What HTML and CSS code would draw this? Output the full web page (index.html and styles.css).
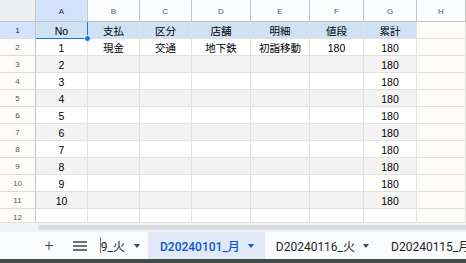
FILE: index.html
```html
<!DOCTYPE html>
<html lang="ja">
<head>
    <meta charset="UTF-8">
    <title>Sheet</title>
    <link rel="stylesheet" href="styles.css">
</head>
<body>
    <div class="sheet">
        <div class="grid">
            <div class="corner"></div>
            <div class="colhead sel">A</div>
            <div class="colhead">B</div>
            <div class="colhead">C</div>
            <div class="colhead">D</div>
            <div class="colhead">E</div>
            <div class="colhead">F</div>
            <div class="colhead">G</div>
            <div class="colhead">H</div>

            <div class="rowhead sel">1</div>
            <div class="cell head active">No<span class="handle"></span></div>
            <div class="cell head">支払</div>
            <div class="cell head">区分</div>
            <div class="cell head">店舗</div>
            <div class="cell head">明細</div>
            <div class="cell head">値段</div>
            <div class="cell head">累計</div>
            <div class="cell extra"></div>

            <div class="rowhead">2</div>
            <div class="cell">1</div>
            <div class="cell">現金</div>
            <div class="cell">交通</div>
            <div class="cell">地下鉄</div>
            <div class="cell">初詣移動</div>
            <div class="cell">180</div>
            <div class="cell">180</div>
            <div class="cell extra"></div>

            <div class="rowhead">3</div>
            <div class="cell band">2</div><div class="cell band"></div><div class="cell band"></div><div class="cell band"></div><div class="cell band"></div><div class="cell band"></div><div class="cell band">180</div><div class="cell extra"></div>
            <div class="rowhead">4</div>
            <div class="cell">3</div><div class="cell"></div><div class="cell"></div><div class="cell"></div><div class="cell"></div><div class="cell"></div><div class="cell">180</div><div class="cell extra"></div>
            <div class="rowhead">5</div>
            <div class="cell band">4</div><div class="cell band"></div><div class="cell band"></div><div class="cell band"></div><div class="cell band"></div><div class="cell band"></div><div class="cell band">180</div><div class="cell extra"></div>
            <div class="rowhead">6</div>
            <div class="cell">5</div><div class="cell"></div><div class="cell"></div><div class="cell"></div><div class="cell"></div><div class="cell"></div><div class="cell">180</div><div class="cell extra"></div>
            <div class="rowhead">7</div>
            <div class="cell band">6</div><div class="cell band"></div><div class="cell band"></div><div class="cell band"></div><div class="cell band"></div><div class="cell band"></div><div class="cell band">180</div><div class="cell extra"></div>
            <div class="rowhead">8</div>
            <div class="cell">7</div><div class="cell"></div><div class="cell"></div><div class="cell"></div><div class="cell"></div><div class="cell"></div><div class="cell">180</div><div class="cell extra"></div>
            <div class="rowhead">9</div>
            <div class="cell band">8</div><div class="cell band"></div><div class="cell band"></div><div class="cell band"></div><div class="cell band"></div><div class="cell band"></div><div class="cell band">180</div><div class="cell extra"></div>
            <div class="rowhead">10</div>
            <div class="cell">9</div><div class="cell"></div><div class="cell"></div><div class="cell"></div><div class="cell"></div><div class="cell"></div><div class="cell">180</div><div class="cell extra"></div>
            <div class="rowhead">11</div>
            <div class="cell band">10</div><div class="cell band"></div><div class="cell band"></div><div class="cell band"></div><div class="cell band"></div><div class="cell band"></div><div class="cell band">180</div><div class="cell extra"></div>
            <div class="rowhead">12</div>
            <div class="cell"></div><div class="cell"></div><div class="cell"></div><div class="cell"></div><div class="cell"></div><div class="cell"></div><div class="cell"></div><div class="cell extra"></div>
        </div>

        <div class="hscroll">
            <div class="thumb"></div>
        </div>

        <div class="tabbar">
            <div class="tool plus">+</div>
            <div class="tool menu">
                <svg width="14" height="10" viewBox="0 0 14 10"><path d="M0 1h14M0 5h14M0 9h14" stroke="#444746" stroke-width="1.4"/></svg>
            </div>
            <div class="tabs">
                <div class="tab clipped"><span class="label">D20240109_火</span><span class="arrow"></span></div>
                <div class="tab current">D20240101_月<span class="arrow"></span></div>
                <div class="tab">D20240116_火<span class="arrow"></span></div>
                <div class="tab">D20240115_月<span class="arrow"></span></div>
            </div>
        </div>
        <div class="footer"></div>
    </div>
</body>
</html>
```

FILE: styles.css
```css
body {
    margin: 0;
    font-family: "Liberation Sans", "Noto Sans CJK JP", sans-serif;
    background: #fff;
    color: #000;
}

.sheet {
    width: 466px;
    height: 263px;
    overflow: hidden;
    display: flex;
    flex-direction: column;
}

.grid {
    display: grid;
    grid-template-columns: 36px 52px 52px 52px 59px 59px 54px 53px 1fr;
    grid-template-rows: 22px;
    grid-auto-rows: 17px;
    height: 222px;
    overflow: hidden;
    flex: none;
}

.grid > div {
    box-sizing: border-box;
    border-right: 1px solid #e1e1e1;
    border-bottom: 1px solid #e1e1e1;
    display: flex;
    align-items: center;
    justify-content: center;
}

.corner {
    background: #eceeef;
    border-right: 1px solid #c4c7c5 !important;
    border-bottom: 1px solid #c4c7c5 !important;
}

.colhead {
    background: #f9fbfd;
    color: #575a5c;
    font-size: 8px;
    border-right-color: #c4c7c5 !important;
    border-bottom: 1px solid #c4c7c5 !important;
    padding-top: 2px;
}

.rowhead {
    background: #fdfcf9;
    color: #575a5c;
    font-size: 8px;
    border-right: 1px solid #c4c7c5 !important;
    border-bottom-color: #dcdcdc !important;
}

.colhead.sel,
.rowhead.sel {
    background: #d3e3fd;
    color: #1f1f1f;
}

.cell {
    font-size: 10.5px;
    line-height: 1;
    padding-top: 3px;
}

.cell.head {
    background: #cfe2f3;
}

.cell.band {
    background: #f3f3f3;
}

.cell.extra {
    background: #fefcf7;
}

.cell.active {
    position: relative;
    border-right: 1px solid #1a73e8 !important;
    border-bottom: 1px solid #1a73e8 !important;
}

.handle {
    position: absolute;
    right: -4px;
    bottom: -4px;
    width: 5px;
    height: 5px;
    border-radius: 50%;
    background: #1a73e8;
    border: 1px solid #fff;
    z-index: 2;
}

.hscroll {
    height: 10px;
    background: #f1f3f4;
    border-top: 1px solid #e1e1e1;
    box-sizing: border-box;
    padding: 2px 0 2px 38px;
    flex: none;
}

.thumb {
    height: 5px;
    background: #dadce0;
    border-radius: 3px 0 0 3px;
}

.tabbar {
    height: 27px;
    background: #f9fbfd;
    display: flex;
    align-items: stretch;
    flex: none;
    font-family: "Roboto", "Noto Sans CJK JP", sans-serif;
    font-size: 12px;
    color: #1f1f1f;
}

.tool {
    width: 24px;
    display: flex;
    align-items: center;
    justify-content: center;
    color: #444746;
}

.plus {
    margin-left: 37px;
    font-size: 16px;
    font-weight: 300;
}

.menu {
    margin-left: 7px;
}

.tabs {
    flex: 1;
    min-width: 0;
    display: flex;
    overflow: hidden;
    margin-left: 8px;
}

.tab {
    display: flex;
    align-items: center;
    padding: 0 11px;
    white-space: nowrap;
    flex: none;
}

.tab.clipped {
    width: 48px;
    box-sizing: border-box;
    padding: 0 8px 0 0;
    justify-content: flex-end;
    overflow: hidden;
    position: relative;
}

.tab.clipped .arrow {
    margin-left: 9px;
}

.tab.clipped::before {
    content: "";
    position: absolute;
    left: 0;
    top: 5px;
    bottom: 6px;
    border-left: 1px solid #747775;
}

.tab.current {
    background: #e1e9f7;
    color: #0b57d0;
    font-weight: 500;
    padding-left: 12px;
}

.arrow {
    width: 0;
    height: 0;
    margin-left: 8px;
    border-left: 3.5px solid transparent;
    border-right: 3.5px solid transparent;
    border-top: 4px solid #444746;
}

.tab.current .arrow {
    border-top-color: #0b57d0;
}

.footer {
    flex: 1;
    background: #3f4c47;
}
```
